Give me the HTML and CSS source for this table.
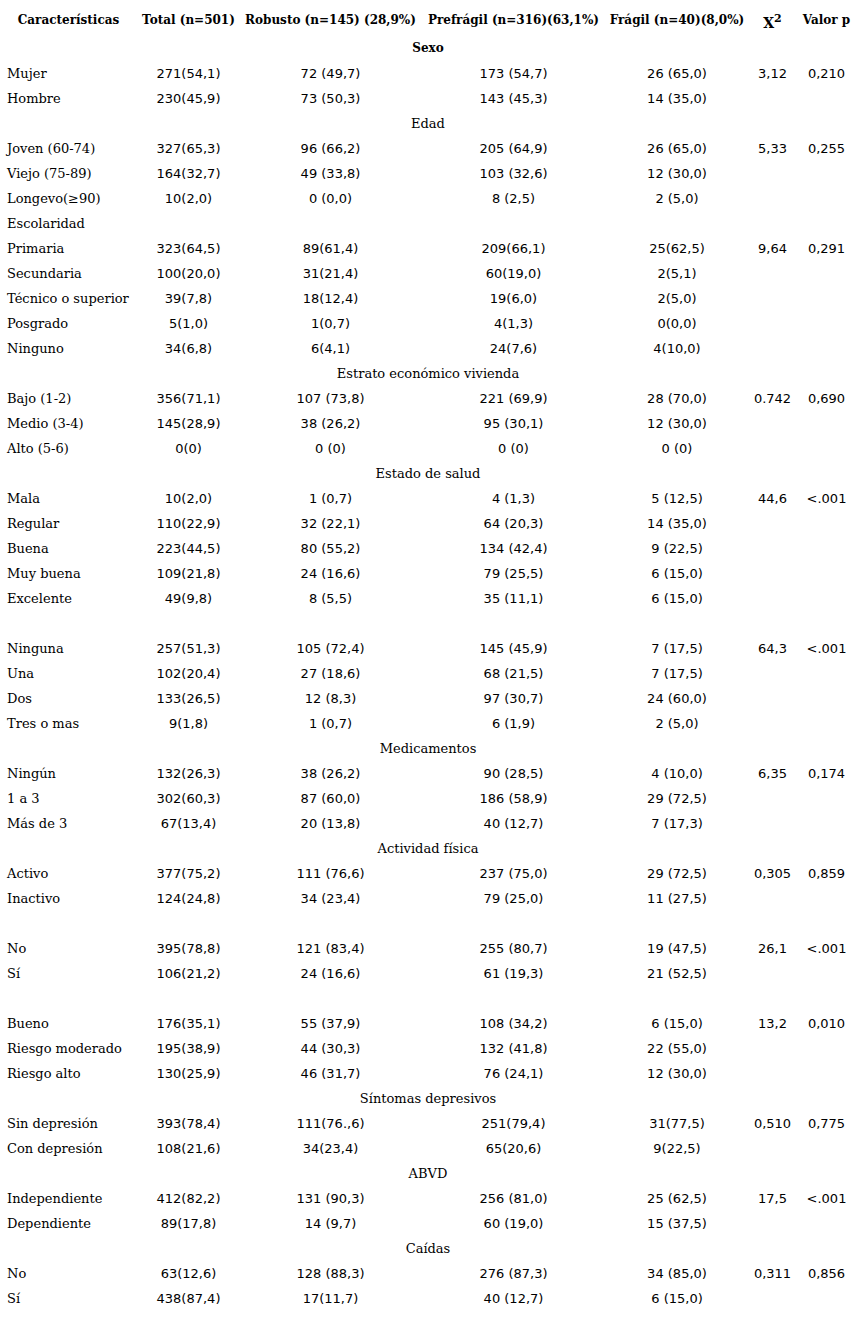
FILE: index.html
```html
<!DOCTYPE html>
<html lang="es">
<head>
<meta charset="utf-8">
<title>Características</title>
<link rel="stylesheet" href="styles.css">
</head>
<body>
<table class="data">
<colgroup>
<col class="c1"><col class="c2"><col class="c3"><col class="c4"><col class="c5"><col class="c6"><col class="c7">
</colgroup>
<thead>
<tr class="head">
<th>Características</th><th>Total (n=501)</th><th>Robusto (n=145) (28,9%)</th><th>Prefrágil (n=316)(63,1%)</th><th>Frágil (n=40)(8,0%)</th><th class="chi">X<sup>2</sup></th><th>Valor p</th>
</tr>
</thead>
<tbody>
<tr><td colspan="7" class="sec bold">Sexo</td></tr>
<tr><td>Mujer</td><td>271(54,1)</td><td>72 (49,7)</td><td>173 (54,7)</td><td>26 (65,0)</td><td>3,12</td><td>0,210</td></tr>
<tr><td>Hombre</td><td>230(45,9)</td><td>73 (50,3)</td><td>143 (45,3)</td><td>14 (35,0)</td><td></td><td></td></tr>
<tr><td colspan="7" class="sec">Edad</td></tr>
<tr><td>Joven (60-74)</td><td>327(65,3)</td><td>96 (66,2)</td><td>205 (64,9)</td><td>26 (65,0)</td><td>5,33</td><td>0,255</td></tr>
<tr><td>Viejo (75-89)</td><td>164(32,7)</td><td>49 (33,8)</td><td>103 (32,6)</td><td>12 (30,0)</td><td></td><td></td></tr>
<tr><td>Longevo(≥90)</td><td>10(2,0)</td><td>0 (0,0)</td><td>8 (2,5)</td><td>2 (5,0)</td><td></td><td></td></tr>
<tr><td>Escolaridad</td><td></td><td></td><td></td><td></td><td></td><td></td></tr>
<tr><td>Primaria</td><td>323(64,5)</td><td>89(61,4)</td><td>209(66,1)</td><td>25(62,5)</td><td>9,64</td><td>0,291</td></tr>
<tr><td>Secundaria</td><td>100(20,0)</td><td>31(21,4)</td><td>60(19,0)</td><td>2(5,1)</td><td></td><td></td></tr>
<tr><td>Técnico o superior</td><td>39(7,8)</td><td>18(12,4)</td><td>19(6,0)</td><td>2(5,0)</td><td></td><td></td></tr>
<tr><td>Posgrado</td><td>5(1,0)</td><td>1(0,7)</td><td>4(1,3)</td><td>0(0,0)</td><td></td><td></td></tr>
<tr><td>Ninguno</td><td>34(6,8)</td><td>6(4,1)</td><td>24(7,6)</td><td>4(10,0)</td><td></td><td></td></tr>
<tr><td colspan="7" class="sec">Estrato económico vivienda</td></tr>
<tr><td>Bajo (1-2)</td><td>356(71,1)</td><td>107 (73,8)</td><td>221 (69,9)</td><td>28 (70,0)</td><td>0.742</td><td>0,690</td></tr>
<tr><td>Medio (3-4)</td><td>145(28,9)</td><td>38 (26,2)</td><td>95 (30,1)</td><td>12 (30,0)</td><td></td><td></td></tr>
<tr><td>Alto (5-6)</td><td>0(0)</td><td>0 (0)</td><td>0 (0)</td><td>0 (0)</td><td></td><td></td></tr>
<tr><td colspan="7" class="sec">Estado de salud</td></tr>
<tr><td>Mala</td><td>10(2,0)</td><td>1 (0,7)</td><td>4 (1,3)</td><td>5 (12,5)</td><td>44,6</td><td>&lt;.001</td></tr>
<tr><td>Regular</td><td>110(22,9)</td><td>32 (22,1)</td><td>64 (20,3)</td><td>14 (35,0)</td><td></td><td></td></tr>
<tr><td>Buena</td><td>223(44,5)</td><td>80 (55,2)</td><td>134 (42,4)</td><td>9 (22,5)</td><td></td><td></td></tr>
<tr><td>Muy buena</td><td>109(21,8)</td><td>24 (16,6)</td><td>79 (25,5)</td><td>6 (15,0)</td><td></td><td></td></tr>
<tr><td>Excelente</td><td>49(9,8)</td><td>8 (5,5)</td><td>35 (11,1)</td><td>6 (15,0)</td><td></td><td></td></tr>
<tr><td colspan="7" class="sec"></td></tr>
<tr><td>Ninguna</td><td>257(51,3)</td><td>105 (72,4)</td><td>145 (45,9)</td><td>7 (17,5)</td><td>64,3</td><td>&lt;.001</td></tr>
<tr><td>Una</td><td>102(20,4)</td><td>27 (18,6)</td><td>68 (21,5)</td><td>7 (17,5)</td><td></td><td></td></tr>
<tr><td>Dos</td><td>133(26,5)</td><td>12 (8,3)</td><td>97 (30,7)</td><td>24 (60,0)</td><td></td><td></td></tr>
<tr><td>Tres o mas</td><td>9(1,8)</td><td>1 (0,7)</td><td>6 (1,9)</td><td>2 (5,0)</td><td></td><td></td></tr>
<tr><td colspan="7" class="sec">Medicamentos</td></tr>
<tr><td>Ningún</td><td>132(26,3)</td><td>38 (26,2)</td><td>90 (28,5)</td><td>4 (10,0)</td><td>6,35</td><td>0,174</td></tr>
<tr><td>1 a 3</td><td>302(60,3)</td><td>87 (60,0)</td><td>186 (58,9)</td><td>29 (72,5)</td><td></td><td></td></tr>
<tr><td>Más de 3</td><td>67(13,4)</td><td>20 (13,8)</td><td>40 (12,7)</td><td>7 (17,3)</td><td></td><td></td></tr>
<tr><td colspan="7" class="sec">Actividad física</td></tr>
<tr><td>Activo</td><td>377(75,2)</td><td>111 (76,6)</td><td>237 (75,0)</td><td>29 (72,5)</td><td>0,305</td><td>0,859</td></tr>
<tr><td>Inactivo</td><td>124(24,8)</td><td>34 (23,4)</td><td>79 (25,0)</td><td>11 (27,5)</td><td></td><td></td></tr>
<tr><td colspan="7" class="sec"></td></tr>
<tr><td>No</td><td>395(78,8)</td><td>121 (83,4)</td><td>255 (80,7)</td><td>19 (47,5)</td><td>26,1</td><td>&lt;.001</td></tr>
<tr><td>Sí</td><td>106(21,2)</td><td>24 (16,6)</td><td>61 (19,3)</td><td>21 (52,5)</td><td></td><td></td></tr>
<tr><td colspan="7" class="sec"></td></tr>
<tr><td>Bueno</td><td>176(35,1)</td><td>55 (37,9)</td><td>108 (34,2)</td><td>6 (15,0)</td><td>13,2</td><td>0,010</td></tr>
<tr><td>Riesgo moderado</td><td>195(38,9)</td><td>44 (30,3)</td><td>132 (41,8)</td><td>22 (55,0)</td><td></td><td></td></tr>
<tr><td>Riesgo alto</td><td>130(25,9)</td><td>46 (31,7)</td><td>76 (24,1)</td><td>12 (30,0)</td><td></td><td></td></tr>
<tr><td colspan="7" class="sec">Síntomas depresivos</td></tr>
<tr><td>Sin depresión</td><td>393(78,4)</td><td>111(76.,6)</td><td>251(79,4)</td><td>31(77,5)</td><td>0,510</td><td>0,775</td></tr>
<tr><td>Con depresión</td><td>108(21,6)</td><td>34(23,4)</td><td>65(20,6)</td><td>9(22,5)</td><td></td><td></td></tr>
<tr><td colspan="7" class="sec">ABVD</td></tr>
<tr><td>Independiente</td><td>412(82,2)</td><td>131 (90,3)</td><td>256 (81,0)</td><td>25 (62,5)</td><td>17,5</td><td>&lt;.001</td></tr>
<tr><td>Dependiente</td><td>89(17,8)</td><td>14 (9,7)</td><td>60 (19,0)</td><td>15 (37,5)</td><td></td><td></td></tr>
<tr><td colspan="7" class="sec">Caídas</td></tr>
<tr><td>No</td><td>63(12,6)</td><td>128 (88,3)</td><td>276 (87,3)</td><td>34 (85,0)</td><td>0,311</td><td>0,856</td></tr>
<tr><td>Sí</td><td>438(87,4)</td><td>17(11,7)</td><td>40 (12,7)</td><td>6 (15,0)</td><td></td><td></td></tr>
</tbody>
</table>
</body>
</html>
```
FILE: styles.css
```css
html, body {
  margin: 0;
  padding: 0;
  background: #fff;
  color: #000;
}
.data {
  border-collapse: collapse;
  table-layout: fixed;
  width: 856px;
  font-family: "DejaVu Serif", serif;
  font-size: 13px;
}
.c1 { width: 137px; }
.c2 { width: 103px; }
.c3 { width: 181px; }
.c4 { width: 185px; }
.c5 { width: 142px; }
.c6 { width: 49px; }
.c7 { width: 59px; }
.data th {
  font-weight: bold;
  font-size: 12px;
  height: 36px;
  padding: 4px 0 0 0;
  box-sizing: border-box;
  white-space: nowrap;
  text-align: center;
  vertical-align: middle;
}
.data th.chi {
  font-size: 14px;
  padding-top: 9px;
}
.data th sup {
  font-size: 11px;
  line-height: 0;
}
.data td {
  height: 25px;
  padding: 0;
  line-height: 25px;
  white-space: nowrap;
  text-align: center;
  font-family: "DejaVu Sans", sans-serif;
  font-size: 13px;
}
.data td:first-child {
  text-align: left;
  padding-left: 7px;
  font-family: "DejaVu Serif", serif;
  font-size: 13px;
}
.data td.sec {
  text-align: center;
  padding-left: 0;
  font-family: "DejaVu Serif", serif;
  font-size: 13px;
}
.data td.sec.bold {
  font-weight: bold;
  font-size: 12px;
}
```
